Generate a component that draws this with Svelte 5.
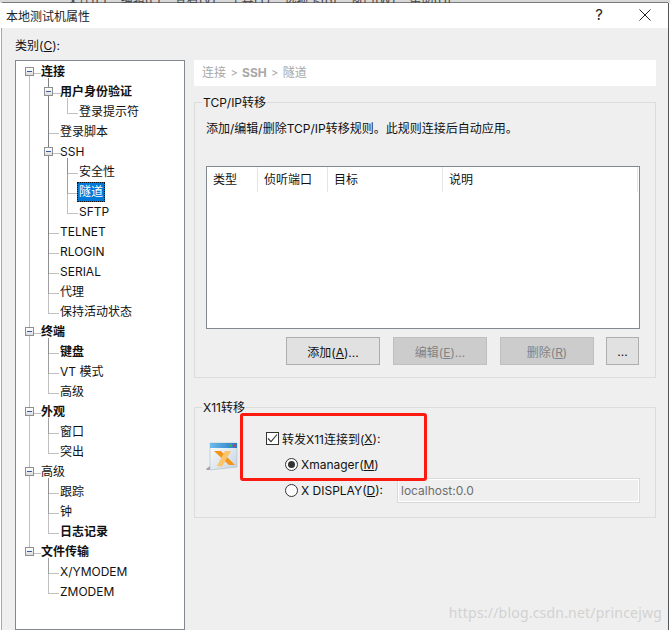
<script lang="ts">
  interface Node {
    label: string;
    level: number;
    bold?: boolean;
    open?: boolean;
    selected?: boolean;
  }

  const ROW = 20;
  const TOP = 12; // centre of first row, relative to the tree box

  const nodes: Node[] = [
    { label: "连接", level: 0, bold: true, open: true },
    { label: "用户身份验证", level: 1, bold: true, open: true },
    { label: "登录提示符", level: 2 },
    { label: "登录脚本", level: 1 },
    { label: "SSH", level: 1, open: true },
    { label: "安全性", level: 2 },
    { label: "隧道", level: 2, selected: true },
    { label: "SFTP", level: 2 },
    { label: "TELNET", level: 1 },
    { label: "RLOGIN", level: 1 },
    { label: "SERIAL", level: 1 },
    { label: "代理", level: 1 },
    { label: "保持活动状态", level: 1 },
    { label: "终端", level: 0, bold: true, open: true },
    { label: "键盘", level: 1, bold: true },
    { label: "VT 模式", level: 1 },
    { label: "高级", level: 1 },
    { label: "外观", level: 0, bold: true, open: true },
    { label: "窗口", level: 1 },
    { label: "突出", level: 1 },
    { label: "高级", level: 0, open: true },
    { label: "跟踪", level: 1 },
    { label: "钟", level: 1 },
    { label: "日志记录", level: 1, bold: true },
    { label: "文件传输", level: 0, bold: true, open: true },
    { label: "X/YMODEM", level: 1 },
    { label: "ZMODEM", level: 1 },
  ];

  const guideX = [13.5, 32.5, 51.5];
  const rowY = (i: number) => TOP + i * ROW + 0.5;

  // dotted tree lines, one elbow from each node back to its parent
  const guides = nodes.flatMap((n, i) => {
    const x = guideX[n.level];
    const end = n.open ? x + 12 : x + 11;
    if (n.level === 0) {
      return [`M${x} ${rowY(i)}H${x + 11}`];
    }
    let p = i - 1;
    while (nodes[p].level >= n.level) p--;
    return [`M${x} ${rowY(p) + 5}V${rowY(i)}H${end}`];
  });
  const rootLine = `M${guideX[0]} ${rowY(0)}V${rowY(24)}`;

  const columns = [
    { label: "类型", width: 51 },
    { label: "侦听端口", width: 70 },
    { label: "目标", width: 115 },
    { label: "说明", width: 195 },
  ];

  const menu = ["文件(F)", "编辑(E)", "查看(V)", "工具(T)", "选项卡(B)", "窗口(W)", "帮助(H)"];
</script>

<div class="screen">
  <div class="behind">
    {#each menu as m}<span>{m}</span>{/each}
  </div>

  <div class="dialog">
    <header class="titlebar">
      <span class="title">本地测试机属性</span>
      <span class="help">?</span>
      <svg class="close" width="12" height="12" viewBox="0 0 12 12">
        <path d="M.5.5l11 11M11.5.5l-11 11" stroke="#222" fill="none" />
      </svg>
    </header>

    <div class="body">
      <aside class="side">
        <div class="side-label">类别(<u>C</u>):</div>
        <div class="tree">
          <svg class="guides" width="168" height="560">
            <path d={rootLine} />
            {#each guides as g}<path d={g} />{/each}
          </svg>
          {#each nodes as n}
            <div class="node lv{n.level}" class:bold={n.bold}>
              {#if n.open}
                <span class="exp"><i></i></span>
              {/if}
              <span class="label" class:selected={n.selected}>{n.label}</span>
            </div>
          {/each}
        </div>
      </aside>

      <main class="panel">
        <div class="crumb">连接 <span class="sep">&gt;</span> <b>SSH</b> <span class="sep">&gt;</span> 隧道</div>

        <section class="group tcp">
          <span class="legend">TCP/IP转移</span>
          <p class="desc">添加/编辑/删除TCP/IP转移规则。此规则连接后自动应用。</p>
          <div class="list">
            <div class="list-head">
              {#each columns as c}
                <span class="col" style="width: {c.width}px">{c.label}</span>
              {/each}
            </div>
          </div>
          <div class="buttons">
            <button class="btn">添加(<u>A</u>)...</button>
            <button class="btn" disabled>编辑(<u>E</u>)...</button>
            <button class="btn" disabled>删除(<u>R</u>)</button>
            <button class="btn small">...</button>
          </div>
        </section>

        <section class="group x11">
          <span class="legend">X11转移</span>
          <svg class="xicon" width="32" height="30" viewBox="0 0 32 30">
            <defs>
              <linearGradient id="win" x1="0" y1="0" x2="1" y2="1">
                <stop offset="0" stop-color="#ffffff" />
                <stop offset="1" stop-color="#c4d2df" />
              </linearGradient>
              <linearGradient id="bar" x1="0" y1="0" x2="1" y2="0">
                <stop offset="0" stop-color="#6cbcec" />
                <stop offset="1" stop-color="#2b78c4" />
              </linearGradient>
            </defs>
            <path d="M0 27l4-3v4H1z" fill="#a3a3a3" />
            <path d="M4 1h27v24L4 28z" fill="url(#win)" stroke="#a8bccb" stroke-width=".6" />
            <rect x="4" y="1" width="27" height="5" fill="url(#bar)" />
            <rect x="24" y="2.5" width="2" height="2" fill="#3fbf4a" />
            <rect x="27" y="2.5" width="2" height="2" fill="#e0383a" />
            <path d="M8 9h7l14 14h-6z" fill="#f4951a" />
            <path d="M25 9h-6L11 24l5 .5z" fill="#fbc468" />
          </svg>
          <div class="options">
            <label class="opt check">
              <span class="box">
                <svg width="11" height="11" viewBox="0 0 11 11"><path d="M1 5.5l3 3.2L10 1.5" fill="none" stroke="#333" stroke-width="1.1" /></svg>
              </span>
              转发X11连接到(<u>X</u>):
            </label>
            <label class="opt radio-row">
              <span class="radio on"></span>
              Xmanager(<u>M</u>)
            </label>
            <div class="opt radio-row">
              <span class="radio"></span>
              <span class="display-label">X DISPLAY(<u>D</u>):</span>
              <span class="input">localhost:0.0</span>
            </div>
          </div>
          <div class="marker"></div>
        </section>
      </main>
    </div>
  </div>

  <span class="watermark">https://blog.csdn.net/princejwg</span>
</div>

<style>
  :global(body) {
    margin: 0;
  }

  .screen {
    position: relative;
    width: 670px;
    height: 630px;
    overflow: hidden;
    background: #fff;
    font-family: Inter, "Noto Sans CJK SC", sans-serif;
    font-size: 12px;
    color: #111;
  }

  u {
    text-underline-offset: 1px;
  }

  .behind {
    height: 3px;
    overflow: hidden;
    display: flex;
    gap: 14px;
    padding-left: 67px;
    line-height: 0;
    color: #444;
    background: #d8d8d8;
  }

  .dialog {
    height: 627px;
    margin: 0 2px 0 2px;
    box-shadow: 1px 0 0 #555, -1px 0 0 #a8a8a8, 0 -1px 0 #7a7a7a;
    background: #efefef;
    display: flex;
    flex-direction: column;
  }

  .titlebar {
    height: 25px;
    flex: none;
    margin-left: -1px;
    background: #fff;
    display: flex;
    align-items: center;
    padding-left: 5px;
    padding-right: 17px;
  }

  .title {
    flex: 1;
    color: #222;
    font-size: 12px;
  }

  .help {
    margin-right: 36px;
    font-size: 15px;
    color: #222;
    margin-top: -2px;
  }

  .close {
    margin-top: -1px;
  }

  .body {
    flex: 1;
    display: flex;
    padding-left: 13px;
    min-height: 0;
  }

  .side {
    width: 170px;
    flex: none;
    display: flex;
    flex-direction: column;
  }

  .side-label {
    height: 32px;
    padding-top: 10px;
    box-sizing: border-box;
    line-height: 16px;
  }

  .tree {
    position: relative;
    flex: 1;
    background: #fff;
    border: 1px solid #828790;
    box-sizing: border-box;
    padding-top: 1px;
  }

  .guides {
    position: absolute;
    left: 0;
    top: 0;
    pointer-events: none;
  }

  .guides path {
    fill: none;
    stroke: #808080;
    stroke-dasharray: 1 1;
  }

  .node {
    position: relative;
    height: 20px;
    line-height: 20px;
    white-space: nowrap;
  }

  .lv0 { padding-left: 25px; }
  .lv1 { padding-left: 44px; }
  .lv2 { padding-left: 63px; }

  .bold .label {
    font-weight: 700;
  }

  .label {
    position: relative;
    display: inline-block;
    height: 20px;
  }

  .label.selected {
    background: #0078d7;
    color: #fff;
    margin-left: -2px;
    padding: 0 2px;
    outline: 1px dotted #111;
    outline-offset: -1px;
  }

  .exp {
    position: absolute;
    top: 5px;
    width: 9px;
    height: 9px;
    box-sizing: border-box;
    background: linear-gradient(#fff, #dcdcdc);
    border: 1px solid #8e8e8e;
    display: flex;
    align-items: center;
    justify-content: center;
  }

  .lv0 .exp { left: 9px; }
  .lv1 .exp { left: 28px; }

  .exp i {
    width: 5px;
    height: 1px;
    background: #3b5aa0;
  }

  .panel {
    width: 462px;
    margin-left: 9px;
    flex: none;
    padding-top: 32px;
    box-sizing: border-box;
  }

  .crumb {
    height: 26px;
    line-height: 26px;
    background: #fff;
    padding-left: 8px;
    color: #a8a8a8;
    box-sizing: border-box;
    word-spacing: 1px;
  }

  .sep {
    font-size: 11px;
  }

  .group {
    position: relative;
    border: 1px solid #dcdcdc;
    box-sizing: border-box;
  }

  .legend {
    position: absolute;
    left: 7px;
    top: -8px;
    line-height: 16px;
    padding: 0 1px;
    background: #efefef;
  }

  .tcp {
    margin-top: 16px;
    height: 276px;
    padding: 0 15px 0 11px;
  }

  .desc {
    margin: 18px 0 0;
    line-height: 16px;
  }

  .list {
    margin-top: 29px;
    height: 163px;
    background: #fff;
    border: 1px solid #828790;
    box-sizing: border-box;
  }

  .list-head {
    display: flex;
    height: 25px;
  }

  .col {
    box-sizing: border-box;
    padding-left: 6px;
    line-height: 25px;
    border-right: 1px solid #e5e5e5;
  }

  .buttons {
    display: flex;
    gap: 13px;
    margin-top: 8px;
    padding-left: 80px;
  }

  .btn {
    width: 94px;
    height: 28px;
    padding: 0;
    font: inherit;
    color: #111;
    background: #e1e1e1;
    border: 1px solid #adadad;
    border-radius: 0;
  }

  .btn:disabled {
    color: #838383;
    background: #cccccc;
    border-color: #bfbfbf;
  }

  .btn.small {
    width: 33px;
    margin-left: -1px;
  }

  .x11 {
    margin-top: 29px;
    height: 111px;
    display: flex;
  }

  .xicon {
    margin: 34px 0 0 11px;
    flex: none;
  }

  .options {
    margin-left: 28px;
    flex: 1;
  }

  .opt {
    display: flex;
    align-items: center;
    height: 20px;
  }

  .check {
    margin-top: 20px;
  }

  .box {
    width: 13px;
    height: 13px;
    box-sizing: border-box;
    border: 1px solid #333;
    background: #fff;
    margin-right: 3px;
    display: flex;
    align-items: center;
    justify-content: center;
  }

  .radio-row {
    margin-left: 19px;
    margin-top: 6px;
  }

  .radio {
    width: 13px;
    height: 13px;
    border: 1px solid #333;
    border-radius: 50%;
    box-sizing: border-box;
    background: #fff;
    margin-right: 3px;
    flex: none;
    position: relative;
  }

  .radio.on::after {
    content: "";
    position: absolute;
    inset: 2px;
    border-radius: 50%;
    background: #333;
  }

  .display-label {
    width: 96px;
    flex: none;
  }

  .input {
    width: 243px;
    height: 25px;
    line-height: 23px;
    box-sizing: border-box;
    border: 1px solid #d9d9d9;
    padding-left: 3px;
    color: #6d6d6d;
    background: #efefef;
    box-shadow: inset 0 0 0 1px #fff;
    flex: none;
  }

  .marker {
    position: absolute;
    left: 45px;
    top: 5px;
    width: 187px;
    height: 68px;
    box-sizing: border-box;
    border: 3px solid #fb1a10;
    border-radius: 3px;
    pointer-events: none;
  }

  .watermark {
    position: absolute;
    right: 8px;
    bottom: 8px;
    font-family: "Noto Sans", sans-serif;
    font-size: 14px;
    color: #d2d2d2;
    letter-spacing: 0.2px;
  }
</style>
